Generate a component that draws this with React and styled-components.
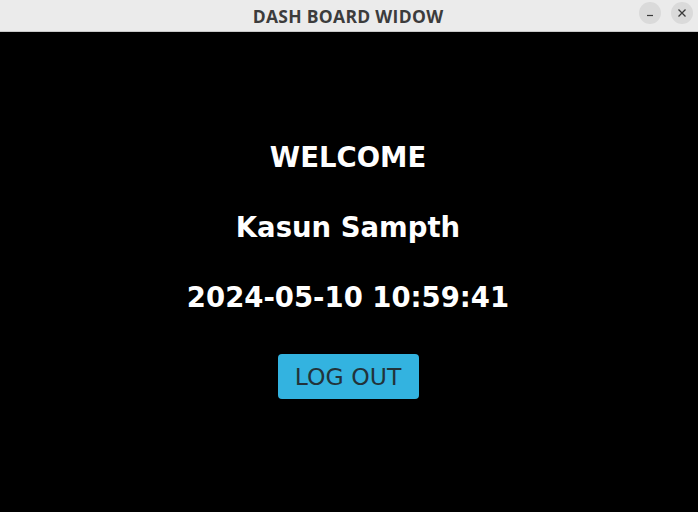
import React from 'react';
import styled, { createGlobalStyle } from 'styled-components';

const GlobalStyle = createGlobalStyle`
  html, body {
    margin: 0;
    padding: 0;
    background: #000;
  }
  #root {
    height: 100vh;
  }
`;

export default function App () {
  return (
    <Window>
      <GlobalStyle/>
      <TitleBar>
        <Title>DASH BOARD WIDOW</Title>
        <Controls>
          <WinButton aria-label="minimize">
            <svg width="10" height="10" viewBox="0 0 10 10">
              <path d="M2 7.5h6" stroke="#3a3a3a" strokeWidth="1.2"/>
            </svg>
          </WinButton>
          <WinButton aria-label="close">
            <svg width="10" height="10" viewBox="0 0 10 10">
              <path d="M1.5 1.5l7 7M8.5 1.5l-7 7" stroke="#3a3a3a" strokeWidth="1.3"/>
            </svg>
          </WinButton>
        </Controls>
      </TitleBar>
      <Body>
        <Heading>WELCOME</Heading>
        <Heading>Kasun Sampth</Heading>
        <Heading>2024-05-10 10:59:41</Heading>
        <LogoutButton>LOG OUT</LogoutButton>
      </Body>
    </Window>
  );
}

const Window = styled.div`
  display: flex;
  flex-direction: column;
  height: 100%;
`;

const TitleBar = styled.div`
  position: relative;
  display: flex;
  align-items: center;
  justify-content: center;
  height: 31px;
  background: #ebebeb;
  border-bottom: 1px solid #c8c8c8;
  flex-shrink: 0;
`;

const Title = styled.div`
  font-family: "Open Sans", "Noto Sans", sans-serif;
  font-weight: 700;
  font-size: 17.5px;
  letter-spacing: 0.3px;
  color: #3c3c3c;
  margin-left: -2px;
`;

const Controls = styled.div`
  position: absolute;
  right: 5px;
  top: 2px;
  display: flex;
  gap: 10px;
`;

const WinButton = styled.div`
  width: 22px;
  height: 22px;
  border-radius: 50%;
  background: #dadada;
  display: flex;
  align-items: center;
  justify-content: center;
`;

const Body = styled.div`
  flex: 1;
  background: #000;
  display: flex;
  flex-direction: column;
  align-items: center;
  gap: 38px;
  padding-top: 109px;
  padding-right: 2px;
`;

const Heading = styled.div`
  font-family: "DejaVu Sans", sans-serif;
  font-weight: 700;
  font-size: 27.5px;
  line-height: 32px;
  color: #fff;
`;

const LogoutButton = styled.button`
  width: 141px;
  height: 45px;
  margin-top: 3px;
  border: none;
  border-radius: 4px;
  background: #33b3e0;
  color: #22333a;
  font-family: "DejaVu Sans", sans-serif;
  font-size: 23.5px;
  padding: 0;
`;
